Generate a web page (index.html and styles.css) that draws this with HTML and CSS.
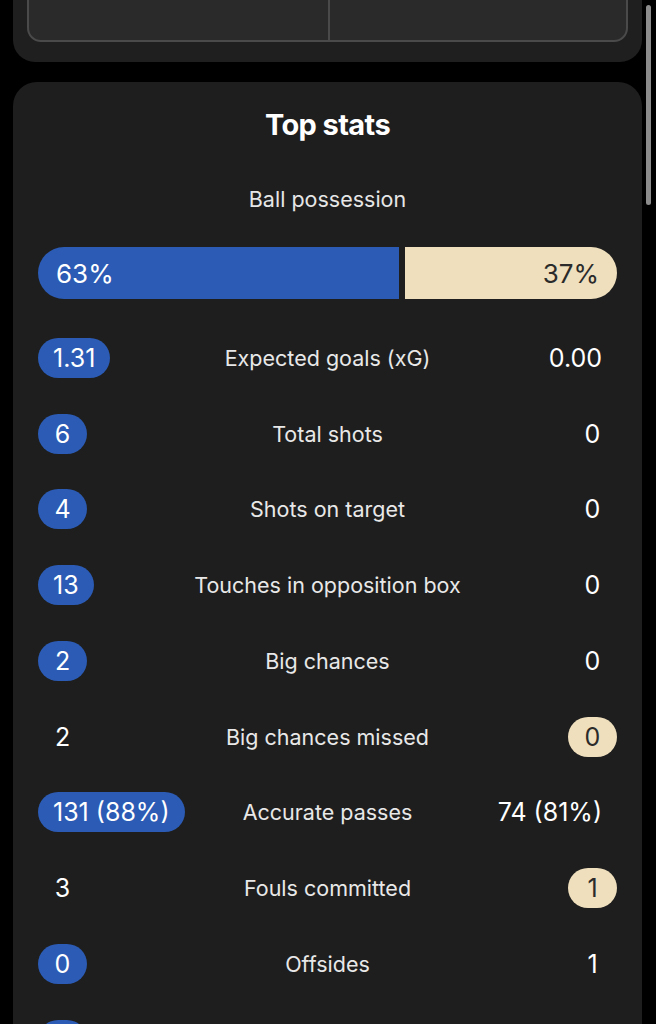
FILE: index.html
```html
<!DOCTYPE html>
<html>
<head>
<meta charset="utf-8">
<link rel="stylesheet" href="styles.css">
</head>
<body>
<div class="screen">
  <div class="prev-card">
    <div class="prev-box">
      <div class="prev-cell"></div>
      <div class="prev-cell"></div>
    </div>
  </div>

  <div class="stats-card">
    <h2 class="title">Top stats</h2>
    <div class="poss-label">Ball possession</div>
    <div class="poss-bar" style="grid-template-columns: 63fr 37fr">
      <div class="poss home">63%</div>
      <div class="poss away">37%</div>
    </div>

    <div class="rows">
      <div class="row"><span class="val home-hl">1.31</span><span class="label">Expected goals (xG)</span><span class="val right">0.00</span></div>
      <div class="row"><span class="val home-hl">6</span><span class="label">Total shots</span><span class="val right">0</span></div>
      <div class="row"><span class="val home-hl">4</span><span class="label">Shots on target</span><span class="val right">0</span></div>
      <div class="row"><span class="val home-hl">13</span><span class="label">Touches in opposition box</span><span class="val right">0</span></div>
      <div class="row"><span class="val home-hl">2</span><span class="label">Big chances</span><span class="val right">0</span></div>
      <div class="row"><span class="val">2</span><span class="label">Big chances missed</span><span class="val right away-hl">0</span></div>
      <div class="row"><span class="val home-hl">131 (88%)</span><span class="label">Accurate passes</span><span class="val right">74 (81%)</span></div>
      <div class="row"><span class="val">3</span><span class="label">Fouls committed</span><span class="val right away-hl">1</span></div>
      <div class="row"><span class="val home-hl">0</span><span class="label">Offsides</span><span class="val right">1</span></div>
      <div class="row"><span class="val home-hl">0</span><span class="label">Corners</span><span class="val right">1</span></div>
    </div>
  </div>

  <div class="scrollbar"></div>
</div>
</body>
</html>
```

FILE: styles.css
```css
html, body {
  margin: 0;
  padding: 0;
  background: #000;
}

body {
  font-family: Inter, "Noto Sans", "Liberation Sans", sans-serif;
  color: #fff;
  width: 656px;
  height: 1024px;
  overflow: hidden;
}

.screen {
  position: relative;
  width: 656px;
  height: 1024px;
  overflow: hidden;
}

.prev-card {
  margin: -60px 14px 0 13px;
  height: 122px;
  box-sizing: border-box;
  padding: 0 14px;
  background: #1f1f1f;
  border-radius: 0 0 22px 22px;
}

.prev-box {
  height: 102px;
  box-sizing: border-box;
  border: 2px solid #4a4a4a;
  border-radius: 0 0 14px 14px;
  background: #2a2a2a;
  display: grid;
  grid-template-columns: 1fr 1fr;
}

.prev-cell + .prev-cell {
  border-left: 2px solid #4a4a4a;
}

.stats-card {
  margin: 20px 14px 0 13px;
  padding: 27px 25px 40px;
  background: #1e1e1e;
  border-radius: 24px 24px 0 0;
  min-height: 1000px;
}

.title {
  margin: 0;
  font-size: 29px;
  line-height: 32px;
  font-weight: 700;
  text-align: center;
  letter-spacing: -0.6px;
}

.poss-label {
  margin-top: 46px;
  font-size: 21.5px;
  line-height: 24px;
  text-align: center;
  color: #e6e6e6;
}

.poss-bar {
  margin-top: 36px;
  display: grid;
  column-gap: 6px;
  height: 52px;
}

.poss {
  display: flex;
  align-items: center;
  font-size: 26px;
  padding: 0 18px;
  min-width: 0;
}

.poss.home {
  background: #2b5bb4;
  color: #fff;
  border-radius: 26px 0 0 26px;
}

.poss.away {
  background: #efdfbc;
  color: #2b2b2b;
  border-radius: 0 26px 26px 0;
  justify-content: flex-end;
}

.rows {
  margin-top: 21px;
}

.row {
  height: 75.75px;
  display: grid;
  grid-template-columns: 1fr auto 1fr;
  align-items: center;
}

.val {
  justify-self: start;
  min-width: 49px;
  height: 40px;
  box-sizing: border-box;
  padding: 0 15px;
  border-radius: 20px;
  display: flex;
  align-items: center;
  justify-content: center;
  font-size: 25px;
  color: #fff;
  white-space: nowrap;
}

.val.right {
  justify-self: end;
}

.home-hl {
  background: #2b5bb4;
}

.away-hl {
  background: #efdfbc;
  color: #2b2b2b;
}

.label {
  font-size: 21.5px;
  color: #e8e8e8;
  text-align: center;
  white-space: nowrap;
}

.scrollbar {
  position: absolute;
  left: 646px;
  top: 5px;
  width: 5px;
  height: 200px;
  border-radius: 3px;
  background: #8c8c8c;
}
```
